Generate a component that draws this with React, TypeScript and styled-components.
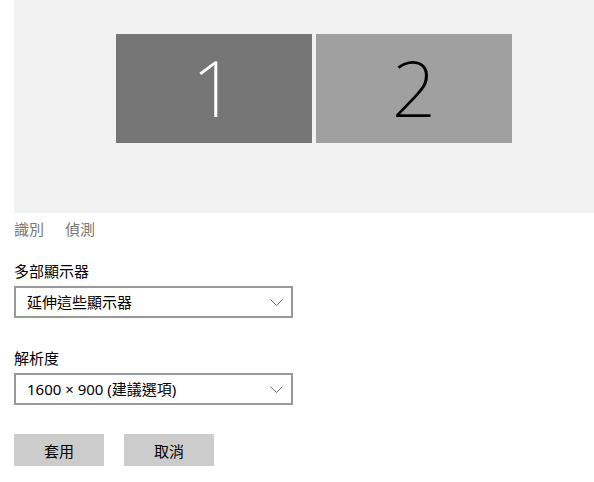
import React from "react";
import styled, { createGlobalStyle } from "styled-components";

const Global = createGlobalStyle`
  html, body { margin: 0; padding: 0; background: #ffffff; }
  body { font-family: "Segoe UI", "Noto Sans", "Noto Sans CJK TC", sans-serif; }
`;

const Page = styled.div`
  width: 594px;
  height: 482px;
  padding-left: 14px;
  box-sizing: border-box;
  display: flex;
  flex-direction: column;
  font-family: "Noto Sans", "Noto Sans CJK TC", sans-serif;
  font-size: 15px;
  color: #000;
`;

const Canvas = styled.div`
  height: 213px;
  background: #f2f2f2;
  display: flex;
  align-items: flex-start;
  gap: 4px;
  padding: 34px 0 0 102px;
  box-sizing: border-box;
`;

const Monitor = styled.div<{ $active?: boolean }>`
  width: 196px;
  height: 109px;
  background: ${(p) => (p.$active ? "#767676" : "#a0a0a0")};
  color: ${(p) => (p.$active ? "#ffffff" : "#000000")};
  display: flex;
  align-items: center;
  justify-content: center;
  font-family: "Noto Sans", sans-serif;
  font-weight: 200;
  font-size: 78px;
  line-height: 1;
  padding-bottom: 4px;
  box-sizing: border-box;
`;

const Links = styled.div`
  display: flex;
  gap: 21px;
  margin-top: 6px;
  line-height: 20px;
  height: 20px;
  color: #777777;
`;

const Link = styled.span`
  cursor: pointer;
`;

const Label = styled.div<{ $top: number }>`
  margin-top: ${(p) => p.$top}px;
  line-height: 20px;
  height: 20px;
`;

const Select = styled.div`
  margin-top: 5px;
  width: 279px;
  height: 32px;
  box-sizing: border-box;
  border: 2px solid #999999;
  background: #ffffff;
  display: flex;
  align-items: center;
  justify-content: space-between;
  padding: 0 8px 0 11px;
  line-height: 20px;
`;

const Chevron = styled.svg`
  width: 13px;
  height: 7px;
  flex: none;
`;

const Buttons = styled.div`
  margin-top: 29px;
  display: flex;
  gap: 20px;
`;

const Button = styled.button`
  width: 90px;
  height: 32px;
  border: none;
  background: #cccccc;
  font-family: inherit;
  font-size: 15px;
  color: #000;
  padding: 0;
`;

const Down = () => (
  <Chevron viewBox="0 0 13 7">
    <path d="M0.5 0.5 L6.5 6.5 L12.5 0.5" fill="none" stroke="#6b6b6b" strokeWidth="1" />
  </Chevron>
);

export default function App() {
  return (
    <>
      <Global />
      <Page>
        <Canvas>
          <Monitor $active>1</Monitor>
          <Monitor>2</Monitor>
        </Canvas>
        <Links>
          <Link>識別</Link>
          <Link>偵測</Link>
        </Links>
        <Label $top={22}>多部顯示器</Label>
        <Select>
          <span>延伸這些顯示器</span>
          <Down />
        </Select>
        <Label $top={30}>解析度</Label>
        <Select>
          <span>1600 × 900 (建議選項)</span>
          <Down />
        </Select>
        <Buttons>
          <Button>套用</Button>
          <Button>取消</Button>
        </Buttons>
      </Page>
    </>
  );
}
